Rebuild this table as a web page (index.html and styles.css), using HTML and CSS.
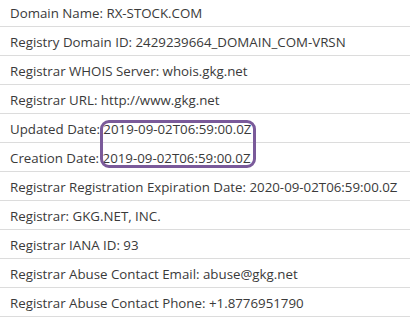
FILE: index.html
```html
<!DOCTYPE html>
<html>
<head>
<meta charset="utf-8">
<link rel="stylesheet" href="styles.css">
</head>
<body>
<ul class="whois">
  <li class="row first">Domain Name: RX-STOCK.COM</li>
  <li class="row">Registry Domain ID: 2429239664_DOMAIN_COM-VRSN</li>
  <li class="row">Registrar WHOIS Server: whois.gkg.net</li>
  <li class="row">Registrar URL: http://www.gkg.net</li>
  <li class="group">
    <div class="row">Updated Date: 2019-09-02T06:59:00.0Z</div>
    <div class="row">Creation Date: 2019-09-02T06:59:00.0Z</div>
    <span class="highlight"></span>
  </li>
  <li class="row">Registrar Registration Expiration Date: 2020-09-02T06:59:00.0Z</li>
  <li class="row">Registrar: GKG.NET, INC.</li>
  <li class="row">Registrar IANA ID: 93</li>
  <li class="row">Registrar Abuse Contact Email: abuse@gkg.net</li>
  <li class="row">Registrar Abuse Contact Phone: +1.8776951790</li>
</ul>
</body>
</html>
```
FILE: styles.css
```css
html, body {
  margin: 0;
  padding: 0;
  background: #fff;
}
.whois {
  list-style: none;
  margin: 0;
  padding: 0;
  font-family: "Open Sans", sans-serif;
  font-size: 13.3px;
  line-height: 18px;
  color: #3a3a3a;
}
.row {
  padding: 5.5px 10px 4.5px;
  border-bottom: 1px solid #dcdcdc;
  white-space: nowrap;
}
.row.first {
  padding-top: 3.5px;
}
.group {
  position: relative;
}
.highlight {
  position: absolute;
  box-sizing: border-box;
  left: 100px;
  top: 6px;
  width: 156px;
  height: 48px;
  border: 3px solid #7a5a9a;
  border-radius: 9px;
}
```
